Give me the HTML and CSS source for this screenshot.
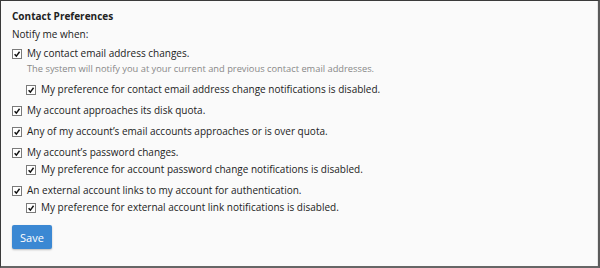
FILE: index.html
```html
<!DOCTYPE html>
<html>
<head>
<meta charset="utf-8">
<link rel="stylesheet" href="styles.css">
</head>
<body>
<div class="frame">
  <div class="title">Contact Preferences</div>
  <div class="lead">Notify me when:</div>
  <div class="group">
    <div class="opt"><span class="cb"><svg viewBox="0 0 10 10"><path d="M2 5.2 L4.2 7.6 L8.2 2.2" /></svg></span>My contact email address changes.</div>
    <div class="desc">The system will notify you at your current and previous contact email addresses.</div>
    <div class="opt sub"><span class="cb"><svg viewBox="0 0 10 10"><path d="M2 5.2 L4.2 7.6 L8.2 2.2" /></svg></span>My preference for contact email address change notifications is disabled.</div>
  </div>
  <div class="group">
    <div class="opt"><span class="cb"><svg viewBox="0 0 10 10"><path d="M2 5.2 L4.2 7.6 L8.2 2.2" /></svg></span>My account approaches its disk quota.</div>
  </div>
  <div class="group">
    <div class="opt"><span class="cb"><svg viewBox="0 0 10 10"><path d="M2 5.2 L4.2 7.6 L8.2 2.2" /></svg></span>Any of my account’s email accounts approaches or is over quota.</div>
  </div>
  <div class="group">
    <div class="opt"><span class="cb"><svg viewBox="0 0 10 10"><path d="M2 5.2 L4.2 7.6 L8.2 2.2" /></svg></span>My account’s password changes.</div>
    <div class="opt sub"><span class="cb"><svg viewBox="0 0 10 10"><path d="M2 5.2 L4.2 7.6 L8.2 2.2" /></svg></span>My preference for account password change notifications is disabled.</div>
  </div>
  <div class="group">
    <div class="opt"><span class="cb"><svg viewBox="0 0 10 10"><path d="M2 5.2 L4.2 7.6 L8.2 2.2" /></svg></span>An external account links to my account for authentication.</div>
    <div class="opt sub"><span class="cb"><svg viewBox="0 0 10 10"><path d="M2 5.2 L4.2 7.6 L8.2 2.2" /></svg></span>My preference for external account link notifications is disabled.</div>
  </div>
  <button class="save">Save</button>
</div>
</body>
</html>
```

FILE: styles.css
```css
html, body {
  margin: 0;
  padding: 0;
  background: #ffffff;
}
.frame {
  box-sizing: border-box;
  width: 600px;
  height: 268px;
  border-top: 1px solid #3a3a3a;
  border-left: 1px solid #3a3a3a;
  border-right: 2px solid #5a5a5a;
  border-bottom: 2px solid #666;
  background: #fafafa;
  padding: 7px 0 0 11px;
  font-family: "Open Sans", "Noto Sans", sans-serif;
  font-size: 10px;
  color: #222;
  box-shadow: inset -5px 0 0 -4px #e6e6e6;
}
.title {
  font-weight: bold;
  line-height: 17px;
  margin-bottom: 1px;
}
.lead {
  line-height: 17px;
  margin-bottom: 2px;
}
.group {
  margin-bottom: 4px;
}
.opt {
  display: flex;
  align-items: center;
  line-height: 17px;
}
.opt.sub {
  padding-left: 14px;
}
.cb {
  box-sizing: border-box;
  width: 10px;
  height: 10px;
  border: 1px solid #7a7a7a;
  background: #fff;
  margin-right: 5px;
  display: inline-flex;
  flex: none;
}
.cb svg {
  width: 8px;
  height: 8px;
  fill: none;
  stroke: #111;
  stroke-width: 1.8;
}
.desc {
  padding-left: 15px;
  font-size: 9.3px;
  line-height: 14px;
  color: #888;
  margin-bottom: 5px;
}
.save {
  margin-top: 5px;
  width: 40px;
  height: 24px;
  padding: 0;
  border: none;
  border-radius: 2px;
  background: #3b88d3;
  color: #fff;
  font-family: "Open Sans", "Noto Sans", sans-serif;
  font-size: 11px;
  box-shadow: 0 1px 2px rgba(0,0,0,0.25);
}
```
